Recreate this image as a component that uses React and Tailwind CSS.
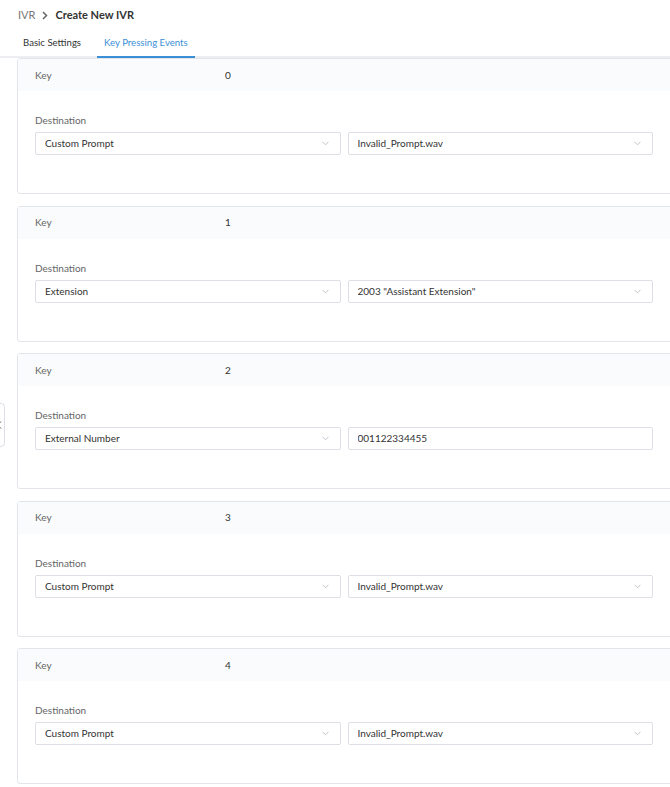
import React from 'react';

const rows = [
    { key: '0', type: 'Custom Prompt', value: 'Invalid_Prompt.wav', select: true },
    { key: '1', type: 'Extension', value: '2003 "Assistant Extension"', select: true },
    { key: '2', type: 'External Number', value: '001122334455', select: false },
    { key: '3', type: 'Custom Prompt', value: 'Invalid_Prompt.wav', select: true },
    { key: '4', type: 'Custom Prompt', value: 'Invalid_Prompt.wav', select: true },
];

const Chevron = () => (
    <svg width="7" height="5" viewBox="0 0 7 5" className="shrink-0">
        <path d="M0.5 0.8 L3.5 3.8 L6.5 0.8" fill="none" stroke="#b8bcc4" strokeWidth="0.9" />
    </svg>
);

const Field = ({ text, select }) => (
    <div className="flex-1 h-[23px] flex items-center justify-between pl-[9px] pr-[11px] border border-[#dcdfe6] rounded-[2px] bg-white text-[10px] text-[#333]">
        <span className="truncate">{text}</span>
        {select && <Chevron />}
    </div>
);

const KeyCard = ({ row }) => (
    <div className="ml-[17px] mr-[-3px] border border-[#e2e5ea] rounded-[3px] bg-white">
        <div className="h-[32px] flex items-center pl-[17px] bg-[#fafbfc] text-[10px]">
            <span className="w-[190px] text-[#666]">Key</span>
            <span className="text-[#333]">{row.key}</span>
        </div>
        <div className="pt-[22px] pb-[38px] pl-[17px] pr-[19px]">
            <div className="h-[14px] leading-[14px] text-[10px] text-[#666] mb-[5px]">Destination</div>
            <div className="flex gap-[7px]">
                <Field text={row.type} select />
                <Field text={row.value} select={row.select} />
            </div>
        </div>
    </div>
);

const App = () => {
    return (
        <div className="relative w-[670px] h-[787px] overflow-hidden bg-white" style={{ fontFamily: 'Lato, "Noto Sans", sans-serif' }}>
            {/* breadcrumb */}
            <div className="h-[30px] flex items-center pl-[18px] gap-[6px] text-[11px]">
                <span className="text-[#777]">IVR</span>
                <svg width="8" height="9" viewBox="0 0 8 9">
                    <path d="M2 1 L5.5 4.5 L2 8" fill="none" stroke="#666" strokeWidth="1.5" />
                </svg>
                <span className="font-bold text-[#333]">Create New IVR</span>
            </div>

            {/* tabs */}
            <div className="h-[28px] flex pl-[16px] border-b-2 border-[#eceef1] text-[9.6px]">
                <div className="px-[7px] flex items-center text-[#333]">Basic Settings</div>
                <div className="ml-[9px] px-[7px] flex items-center text-[#3b8fd6] border-b-2 border-[#3b8fd6] mb-[-2px]">
                    Key Pressing Events
                </div>
            </div>

            {/* key events */}
            <div className="flex flex-col gap-[11.5px]">
                {rows.map((row) => (
                    <KeyCard key={row.key} row={row} />
                ))}
            </div>

            {/* collapsed side panel toggle */}
            <div className="absolute left-[-16px] top-[403px] w-[21px] h-[44px] flex items-center justify-end pr-[2px] border border-[#dcdfe6] rounded-r-[4px] bg-white">
                <svg width="5" height="8" viewBox="0 0 5 8">
                    <path d="M4 0.5 L1 4 L4 7.5" fill="none" stroke="#666" strokeWidth="1" />
                </svg>
            </div>
        </div>
    );
};

export default App;
